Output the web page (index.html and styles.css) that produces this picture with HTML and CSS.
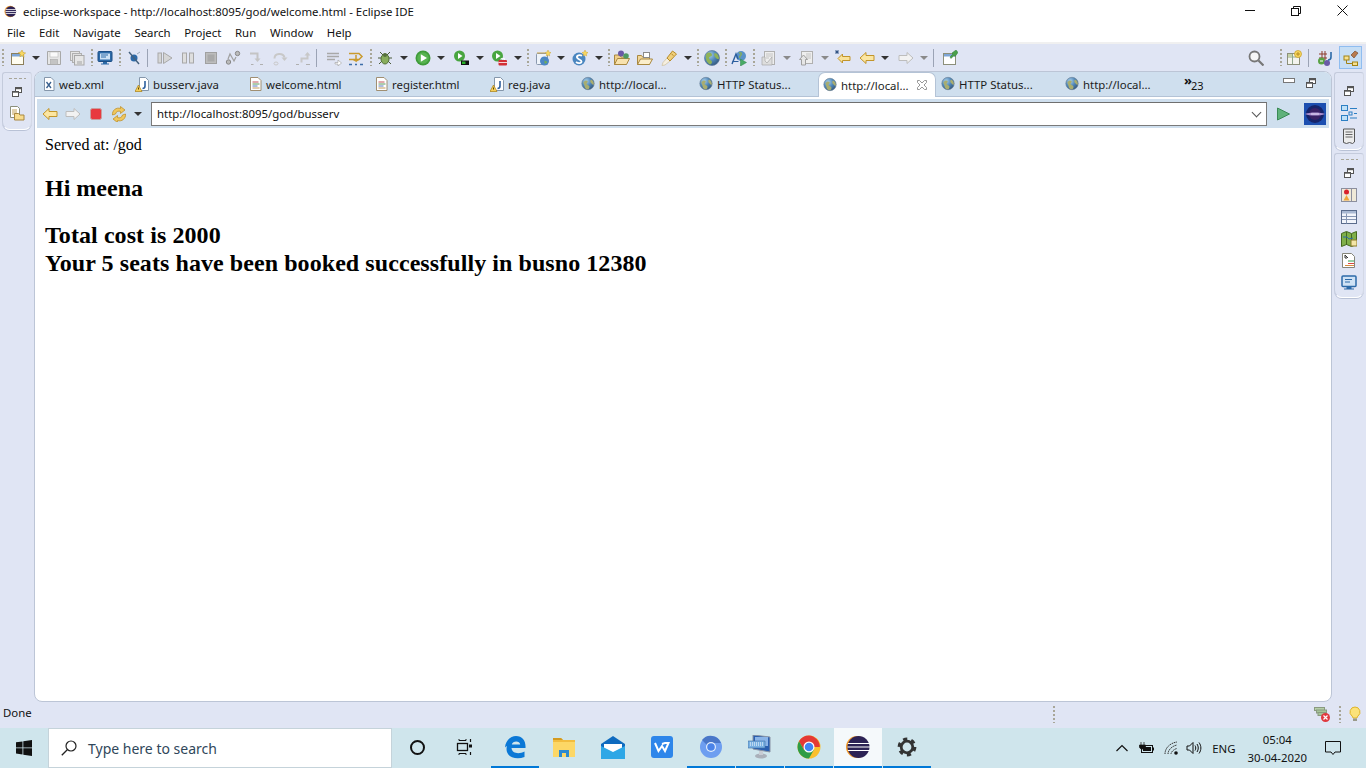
FILE: index.html
```html
<!DOCTYPE html>
<html lang="en">
<head>
  <meta charset="UTF-8" />
  <title>eclipse-workspace - http://localhost:8095/god/welcome.html - Eclipse IDE</title>
  <link rel="stylesheet" href="styles.css">
</head>
<body>

<!-- icon sheet -->
<svg class="sheet" xmlns="http://www.w3.org/2000/svg">
  <defs>
    <radialGradient id="gb" cx="35%" cy="30%" r="75%"><stop offset="0" stop-color="#a9cfe8"/><stop offset=".55" stop-color="#4f86b8"/><stop offset="1" stop-color="#35597e"/></radialGradient>
  </defs>
  <symbol id="i-eclipse" viewBox="0 0 16 16"><circle cx="7.6" cy="8" r="7" fill="#f39a2b"/><circle cx="8.4" cy="8" r="6.6" fill="#2c2255"/><path d="M2 5.6h13M1.8 8h13.4M2 10.4h13" stroke="#fff" stroke-width="1"/></symbol>
  <symbol id="i-new" viewBox="0 0 16 16"><rect x="1.5" y="3.5" width="12" height="11" fill="#fffdf0" stroke="#8c7f5a"/><rect x="2" y="4" width="11" height="2.5" fill="#7ea6d6"/><path d="M12 0l1 2.4 2.6.6-2 1.6.5 2.6L12 5.6l-2.100 1.200.5-2.600-2-1.600 2.600-.6z" fill="#f8d860" stroke="#c49a20" stroke-width=".5"/></symbol>
  <symbol id="i-save" viewBox="0 0 16 16"><path d="M1.500 1.500h13v13h-13z" fill="#e6e6e6" stroke="#a8a8a8"/><rect x="4" y="2" width="8" height="5" fill="#fafafa" stroke="#bbb" stroke-width=".6"/><rect x="4.500" y="9.500" width="7" height="5" fill="#c4c4c4" stroke="#a8a8a8" stroke-width=".6"/></symbol>
  <symbol id="i-saveall" viewBox="0 0 16 16"><rect x="1.500" y="1.500" width="9" height="9" fill="#e6e6e6" stroke="#b0b0b0"/><rect x="3.500" y="3.500" width="9" height="9" fill="#e0e0e0" stroke="#b0b0b0"/><rect x="5.500" y="5.500" width="9.500" height="9.500" fill="#e6e6e6" stroke="#a8a8a8"/><rect x="8" y="11" width="5" height="4" fill="#c4c4c4"/></symbol>
  <symbol id="i-monitor" viewBox="0 0 16 16"><rect x="1" y="1.500" width="14" height="10" rx="1" fill="#2c6aa8" stroke="#1d4f86"/><rect x="3" y="3.500" width="10" height="6" fill="#cfe2f5"/><path d="M4 5h7M4 7h5" stroke="#2c6aa8"/><path d="M6 12h4v1.500H12v1H4v-1h2z" fill="#2c6aa8"/></symbol>
  <symbol id="i-skip" viewBox="0 0 16 16"><circle cx="8" cy="8" r="3.500" fill="#2c6aa8"/><path d="M3 2l10 12" stroke="#44617f" stroke-width="1.400"/><path d="M11 4l3-2" stroke="#9ab" stroke-width="1"/></symbol>
  <symbol id="i-resume" viewBox="0 0 16 16"><rect x="1" y="3" width="3.500" height="10" fill="#d6d6d6" stroke="#a8a8a8"/><path d="M6.500 2.500l8.500 5.500-8.500 5.500z" fill="#d6d6d6" stroke="#a8a8a8"/></symbol>
  <symbol id="i-pause" viewBox="0 0 16 16"><rect x="2.500" y="3" width="4" height="10" fill="#dedede" stroke="#a8a8a8"/><rect x="9.500" y="3" width="4" height="10" fill="#dedede" stroke="#a8a8a8"/></symbol>
  <symbol id="i-stop" viewBox="0 0 16 16"><rect x="2.500" y="2.500" width="11" height="11" fill="#bdbdbd" stroke="#a0a0a0"/><rect x="4.500" y="4.500" width="7" height="7" fill="#a9a9a9"/></symbol>
  <symbol id="i-disc" viewBox="0 0 16 16"><circle cx="3.500" cy="12" r="2.200" fill="#bbb" stroke="#888"/><circle cx="12.500" cy="3.500" r="2.200" fill="#bbb" stroke="#888"/><path d="M3 9l2-5 4 7 2-4" fill="none" stroke="#a0a0a0" stroke-width="1.200"/></symbol>
  <symbol id="i-into" viewBox="0 0 16 16"><path d="M1 3.500h7.500V9" fill="none" stroke="#c4c4c4" stroke-width="2"/><path d="M5.500 8.500h6L8.500 12z" fill="#c4c4c4"/><path d="M2 14.500h2.500M11 14.500h3" stroke="#b0b0b0" stroke-width="1.200"/></symbol>
  <symbol id="i-over" viewBox="0 0 16 16"><path d="M2.500 8.500C2.500 3 11 2.500 12.500 7.500" fill="none" stroke="#c8c8c8" stroke-width="2"/><path d="M9.500 7.500h6L12.500 11z" fill="#c8c8c8"/><path d="M2 13.500a2 1.500 0 1 0 4 0a2 1.500 0 1 0-4 0" fill="none" stroke="#c8c8c8"/></symbol>
  <symbol id="i-ret" viewBox="0 0 16 16"><path d="M6.500 12.500V8.500h6V5" fill="none" stroke="#c8c8c8" stroke-width="2"/><path d="M9.500 5.500h6L12.500 2z" fill="#c8c8c8"/><path d="M1 14.500h3M11 14.500h4" stroke="#b0b0b0" stroke-width="1.200"/></symbol>
  <symbol id="i-frames" viewBox="0 0 16 16"><path d="M1 3.500h12M1 6.500h12M1 9.500h8" stroke="#a8a8a8" stroke-width="1.400"/><path d="M9 12.500h3V10l3.500 3-3.500 3v-2H9z" fill="#fff" stroke="#a8a8a8" stroke-width=".7"/></symbol>
  <symbol id="i-filter" viewBox="0 0 16 16"><path d="M1 3.500h10l3 3-3 3H1" fill="none" stroke="#c99a2e" stroke-width="1.500"/><path d="M8 5v6l-2.500-1.500M8 11l2.500-1.500" fill="none" stroke="#c99a2e" stroke-width="1.500"/><path d="M1 14.500h3M7 14.500h2M12 14.500h3" stroke="#3c6ea8" stroke-width="1.300"/></symbol>
  <symbol id="i-debug" viewBox="0 0 16 16"><path d="M3 2l3 3M13 2l-3 3M1 8h3M15 8h-3M2 14l3-3M14 14l-3-3" stroke="#4a5a3a" stroke-width="1"/><ellipse cx="8" cy="9" rx="4" ry="5" fill="#88ad5c" stroke="#4f6f35"/><circle cx="8" cy="5" r="2" fill="#55703c"/></symbol>
  <symbol id="i-run" viewBox="0 0 16 16"><circle cx="8" cy="8" r="7.500" fill="#3f9b3a"/><circle cx="8" cy="8" r="5.800" fill="#57b34f"/><path d="M5.800 4.200l6.200 3.800-6.200 3.800z" fill="#fff"/></symbol>
  <symbol id="i-cover" viewBox="0 0 16 16"><circle cx="6.500" cy="6" r="5.500" fill="#48a540"/><path d="M5 3l4.500 3L5 9z" fill="#fff"/><rect x="8" y="10.500" width="8" height="4.500" fill="#111"/><rect x="9" y="11.500" width="3.500" height="2.500" fill="#28b028"/></symbol>
  <symbol id="i-ext" viewBox="0 0 16 16"><circle cx="6.500" cy="6" r="5.500" fill="#48a540"/><path d="M5 3l4.500 3L5 9z" fill="#fff"/><rect x="7.500" y="10" width="8.500" height="5.500" rx="1" fill="#d22f35"/><path d="M10 10V8.500h3.500V10M7.500 12.500h8.500" stroke="#fff" stroke-width=".8" fill="none"/></symbol>
  <symbol id="i-server" viewBox="0 0 16 16"><rect x="1.500" y="3.500" width="11" height="11" rx="1" fill="#eef3fa" stroke="#8a98ae"/><path d="M2 3h8" stroke="#c8a24a"/><circle cx="9.500" cy="11" r="4.500" fill="#4b86c6"/><path d="M7 9c2 0 3 1 2.500 3s1.500 2 3 0" fill="#6fae56"/><path d="M13 0l.8 2 2.200.6-1.700 1.300.4 2.100L13 5l-1.700 1 .4-2.100L10 2.600l2.200-.6z" fill="#f8d860" stroke="#c49a20" stroke-width=".4"/></symbol>
  <symbol id="i-spring" viewBox="0 0 16 16"><circle cx="7" cy="9" r="6.500" fill="#4a86c0"/><path d="M10 5.800C7.500 4.500 4.500 5.500 5 7.500S9.500 9.500 9.500 11.500 6 13.500 4 12" fill="none" stroke="#fff" stroke-width="1.800"/><path d="M13 0l.8 2 2.200.6-1.700 1.300.4 2.100L13 5l-1.700 1 .4-2.100L10 2.600l2.200-.6z" fill="#f8d860" stroke="#c49a20" stroke-width=".4"/></symbol>
  <symbol id="i-openp" viewBox="0 0 16 16"><path d="M.5 5h5l1.500 2h5v7.500H.5z" fill="#f1cf8a" stroke="#a98840"/><path d="M.5 14.500l3-6h12l-3 6z" fill="#f8e2ae" stroke="#a98840"/><circle cx="7" cy="3.500" r="3" fill="#6a5aa6"/><circle cx="12" cy="6" r="2.800" fill="#4f9a62"/></symbol>
  <symbol id="i-opent" viewBox="0 0 16 16"><path d="M.5 5.500h4l1.500 2h6.500v7H.5z" fill="#f1d69a" stroke="#a98840"/><path d="M.5 14.500l3-5.500h12l-3 5.500z" fill="#fbeecb" stroke="#a98840"/><rect x="6.500" y="2.500" width="6" height="5" fill="#fff" stroke="#8a8a8a"/></symbol>
  <symbol id="i-pencil" viewBox="0 0 16 16"><path d="M1 15.500l1-3 4-4.500 3 3-5 4z" fill="#f6efe0" stroke="#cdbf9a" stroke-width=".7"/><path d="M6 8l5.500-7 4 3-6.500 7z" fill="#f0cf7a" stroke="#b78c2c"/><path d="M10.500 4l2 1.500" stroke="#b78c2c"/></symbol>
  <symbol id="i-globe" viewBox="0 0 16 16"><circle cx="8" cy="8" r="7.500" fill="url(#gb)"/><path d="M3 3c3-1 5 0 5 2s-3 1-3 3 3 2 3 4-2 3-3 2-3-3-3-5-1-4 1-6zM11 3c2 0 4 3 4 5s-2 1-3 0-3-4-1-5z" fill="#8fb25a"/><circle cx="8" cy="8" r="7.500" fill="none" stroke="#5c7a9c" stroke-width=".7"/></symbol>
  <symbol id="i-webp" viewBox="0 0 16 16"><circle cx="10" cy="6" r="5" fill="#5a92c8"/><path d="M8 3c2-1 3 1 2 2s-2 1-1 3" stroke="#86ad58" fill="none" stroke-width="1.400"/><path d="M1 14L5 4l2 5" fill="none" stroke="#2c5f9e" stroke-width="1.400"/><path d="M1.500 11.500h6" stroke="#2c5f9e"/><path d="M9.500 9l6 3.500-6 3.500z" fill="#49ab66" stroke="#2f8249" stroke-width=".5"/></symbol>
  <symbol id="i-nexta" viewBox="0 0 16 16"><rect x="3.500" y="1.500" width="10" height="13" fill="#eee" stroke="#b0b0b0"/><path d="M5 4h7M5 6h7M5 8h3" stroke="#c4c4c4"/><path d="M1 7h3v4l2 2 5-6v8H1z" fill="#ddd" stroke="#a8a8a8" stroke-width=".7"/></symbol>
  <symbol id="i-preva" viewBox="0 0 16 16"><rect x="3.500" y="1.500" width="11" height="12" fill="#eee" stroke="#b0b0b0"/><path d="M8 4h5M8 6h5M8 8h5" stroke="#c4c4c4"/><path d="M5.500 5l4 4.500H7.500V15h-4V9.500h-2z" fill="#e6e6e6" stroke="#a0a0a0"/></symbol>
  <symbol id="i-lastedit" viewBox="0 0 16 16"><path d="M7.500 4L3 8.500 7.500 13v-2.500h7.500v-4H7.500z" fill="#f9e29a" stroke="#c2952a"/><path d="M0 2h4M2 0v4M.5.500l3 3M3.500.500l-3 3" stroke="#2c4f80" stroke-width=".9"/></symbol>
  <symbol id="i-back" viewBox="0 0 16 16"><path d="M7 2.500L1 8l6 5.500V10.500h8v-5H7z" fill="#fbe6a2" stroke="#c2952a"/></symbol>
  <symbol id="i-fwd" viewBox="0 0 16 16"><path d="M9 2.500L15 8l-6 5.500V10.500H1v-5h8z" fill="#f2f2f2" stroke="#bdbdbd"/></symbol>
  <symbol id="i-pin" viewBox="0 0 16 16"><rect x="1.500" y="3.500" width="12" height="11" fill="#fff" stroke="#8c8f7a"/><rect x="2" y="4" width="11" height="2.500" fill="#7ea6d6"/><path d="M8 7l3-3-1-1 4-3 2 2.500-3 4-1-1-3 3z" fill="#4aa04a" stroke="#2c7a35" stroke-width=".5"/></symbol>
  <symbol id="i-search" viewBox="0 0 16 16"><circle cx="6.500" cy="6.500" r="5" fill="#f6f6f6" stroke="#777" stroke-width="1.800"/><path d="M10.500 10.500L15.500 15.500" stroke="#777" stroke-width="2.200"/></symbol>
  <symbol id="i-openpersp" viewBox="0 0 16 16"><rect x="1.500" y="3.500" width="12" height="11" fill="#f4f4ee" stroke="#8c8f7a"/><path d="M2 7h11M6.500 4v10" stroke="#8fa68c"/><rect x="2" y="4" width="4" height="3" fill="#c4d2a8"/><circle cx="12" cy="4" r="3.500" fill="#f8d860" stroke="#c49a20" stroke-width=".7"/><path d="M12 2v4M10 4h4" stroke="#a97f14" stroke-width=".8"/></symbol>
  <symbol id="i-jee" viewBox="0 0 16 16"><path d="M2 4h8M2 8h8M5 1v9M8 1v9" stroke="#8c3a2c" stroke-width="1"/><circle cx="4.500" cy="11" r="3.500" fill="#5aa245"/><path d="M3 11h3" stroke="#fff"/><circle cx="10" cy="13" r="3" fill="#6a5aa6"/><path d="M14 2v5c0 2-1 3-3 3" fill="none" stroke="#2c6aa8" stroke-width="1.600"/></symbol>
  <symbol id="i-java" viewBox="0 0 16 16"><rect x="1" y="6" width="5" height="4" fill="#f7e18f" stroke="#a28316"/><rect x="9.500" y="12" width="5" height="3.500" fill="#f7e18f" stroke="#a28316"/><path d="M3.500 10v3.500h6" fill="none" stroke="#a28316"/><path d="M8 5l4-4 3 2-4 5z" fill="#b87a4e" stroke="#6d4020" stroke-width=".6"/></symbol>

  <symbol id="t-xml" viewBox="0 0 16 16"><path d="M3.500 1.500h6.500l3 3v10h-9.500z" fill="#fff" stroke="#8597ab"/><path d="M5.500 6l4.500 6M10 6l-4.500 6" stroke="#375f8d" stroke-width="1.300"/></symbol>
  <symbol id="t-java" viewBox="0 0 16 16"><path d="M4.500 1.500h6l3 3v10h-9z" fill="#fff" stroke="#8597ab"/><path d="M10 5v5c0 2-1 2.500-2.500 2.500" fill="none" stroke="#2c5f9e" stroke-width="1.600"/><path d="M3.500 9L7 15.500H0z" fill="#f6cf59" stroke="#a97f14" stroke-width=".7"/><path d="M3.500 11.500v2" stroke="#5a4300"/></symbol>
  <symbol id="t-html" viewBox="0 0 16 16"><path d="M2.500 1.500h7.500l3 3v10h-10.500z" fill="#fff" stroke="#a08f72"/><path d="M4.500 6h6" stroke="#c2545a"/><path d="M4.500 8h7" stroke="#5a9a5a"/><path d="M4.500 10h5" stroke="#5a7ac2"/><path d="M4.500 12h7" stroke="#c29a5a"/></symbol>
  <symbol id="t-globe" viewBox="0 0 16 16"><circle cx="7" cy="7.500" r="6.200" fill="url(#gb)"/><path d="M2.500 6c1-1.500 3-2 4-1s-1 2-1 3 3 1 3 3-1.500 2.500-2.500 2.500-2.500-2-2.500-3.500-1.500-3-1-4zM10 3.500c2 1 3 2.500 3 4.500s-2 0-3-1-1-2.500 0-3.500z" fill="#a8ad70"/><circle cx="7" cy="7.500" r="6.200" fill="none" stroke="#6b8296" stroke-width=".6"/></symbol>
  <symbol id="i-close" viewBox="0 0 12 12"><path d="M1.500 1.500h2L6 4l2.500-2.500h2v2L8 6l2.500 2.500v2h-2L6 8l-2.500 2.500h-2v-2L4 6 1.500 3.500z" fill="none" stroke="#8c8c8c" stroke-width=".9"/></symbol>
  <symbol id="i-restore" viewBox="0 0 10 10"><rect x="3.500" y=".5" width="6" height="5" fill="#fff" stroke="#555"/><path d="M3.500 1h6v1.200h-6z" fill="#555"/><rect x=".5" y="4.500" width="6" height="5" fill="#fff" stroke="#555"/><path d="M1 4.500h5.500v1.200H1z" fill="#555"/></symbol>
  <symbol id="i-minview" viewBox="0 0 12 6"><rect x=".5" y=".5" width="11" height="4" fill="#fff" stroke="#777"/></symbol>
  <symbol id="i-go" viewBox="0 0 16 16"><path d="M2.500 2l12 6-12 6z" fill="#5fb27a" stroke="#3a8a55"/></symbol>
  <symbol id="i-ball" viewBox="0 0 22 22"><rect width="22" height="22" fill="#1c4fb0"/><circle cx="11" cy="11" r="9" fill="#16246a"/><circle cx="11" cy="11" r="6" fill="#3a2266"/><path d="M1 11c5-2 15-2 20 0-5 2-15 2-20 0z" fill="#a98fd0"/><path d="M7 11h8" stroke="#e6dcf5"/></symbol>
  <symbol id="i-red" viewBox="0 0 16 16"><rect x="2.500" y="2.500" width="11" height="11" rx="2" fill="#e83a3f" stroke="#c7a0a0"/></symbol>
  <symbol id="i-refresh" viewBox="0 0 16 16"><path d="M1.500 9a6 6 0 0 1 8-6.500V.5l4.500 3.500-4.500 3.500V5.500a3.500 3.500 0 0 0-5 2.500z" fill="#f0c75e" stroke="#bb8a1c" stroke-width=".7"/><path d="M14.500 8a6 6 0 0 1-8 6.500v2L2 13l4.500-3.500v2a3.500 3.500 0 0 0 5-2.500z" fill="#f0c75e" stroke="#bb8a1c" stroke-width=".7"/></symbol>
  <symbol id="i-persp" viewBox="0 0 16 16"><path d="M1.500 1.500h7l2 2v9h-9z" fill="#fff" stroke="#8c8f7a"/><path d="M3 5h5M3 7h5M3 9h5" stroke="#c2a25a"/><path d="M5.500 8.500h4l1.500 1.500h4v5H5.500z" fill="#f8dc8e" stroke="#a98840"/></symbol>

  <symbol id="r-list" viewBox="0 0 16 16"><rect x=".5" y=".5" width="6" height="5" fill="#bfe0f7" stroke="#2c7fc4"/><rect x=".5" y="10.500" width="6" height="5" fill="#bfe0f7" stroke="#2c7fc4"/><rect x="8" y="7" width="3" height="3" fill="none" stroke="#2c7fc4"/><path d="M9 3.500h7M13 8.500h3M9 13h7" stroke="#2c7fc4"/></symbol>
  <symbol id="r-page" viewBox="0 0 16 16"><path d="M2.500 1h11v13l-2 1.500-3-1-3 1-3-1z" fill="#ececec" stroke="#555"/><path d="M4.500 4h7M4.500 6.500h7M4.500 9h7" stroke="#666"/></symbol>
  <symbol id="r-mark" viewBox="0 0 16 16"><rect x=".5" y="1.500" width="15" height="13" fill="#efe9d8" stroke="#8c8f9e"/><path d="M10.500 2v12" stroke="#8c8f9e"/><circle cx="5.500" cy="5" r="2.500" fill="#d9202a"/><path d="M5.500 8l3 5.500h-6z" fill="#f0a53a"/></symbol>
  <symbol id="r-table" viewBox="0 0 16 16"><rect x=".5" y="1.500" width="15" height="13" fill="#f2f5fb" stroke="#5a6c8c"/><rect x="1" y="2" width="14" height="2.500" fill="#a9b9d3"/><path d="M1 7.500h14M1 10.500h14M5.500 4.500v10" stroke="#8696b3"/></symbol>
  <symbol id="r-map" viewBox="0 0 16 16"><path d="M.5 2.500l5-2 5 2 5-2v13l-5 2-5-2-5 2z" fill="#7fb04a" stroke="#44681e"/><path d="M5.500 1v13M10.500 3v12" stroke="#44681e"/><path d="M2 6h4l2 2 4-1" stroke="#2c6aa8" fill="none"/><rect x="10" y="9" width="6" height="6" fill="#f4e6a8" stroke="#8c7a2c"/></symbol>
  <symbol id="r-form" viewBox="0 0 16 16"><path d="M1.500.5h9l3 3v11h-12z" fill="#fff" stroke="#85857a"/><path d="M4 2l3 3M4 2v3h2" stroke="#333" fill="none"/><path d="M7 8h6" stroke="#2fa04a"/><path d="M7 10.500h6" stroke="#d6473f"/><path d="M4 12.500h9" stroke="#d68a3f"/></symbol>
  <symbol id="r-console" viewBox="0 0 16 16"><rect x="1" y="1" width="14" height="10.500" rx="1" fill="#cfe2f5" stroke="#2c6aa8" stroke-width="1.500"/><path d="M4 4.500h7M4 7h5" stroke="#2c6aa8"/><path d="M5.500 12h5v1.500H13v1H3v-1h2.500z" fill="#2c6aa8"/></symbol>

  <symbol id="s-err" viewBox="0 0 16 16"><rect x=".5" y="1.500" width="10" height="3" fill="#b5cfa8" stroke="#8a9a80"/><rect x="2.500" y="4" width="10" height="3" fill="#a5c598" stroke="#8a9a80"/><rect x="4" y="6.500" width="8" height="3" fill="#a5c598" stroke="#8a9a80"/><circle cx="11.500" cy="11.500" r="4.500" fill="#e0383e"/><path d="M9.500 9.500l4 4M13.500 9.500l-4 4" stroke="#fff" stroke-width="1.200"/></symbol>
  <symbol id="s-bulb" viewBox="0 0 16 16"><path d="M8 1a5 5 0 0 0-3 9c.6.600 1 1.300 1 2h4c0-.7.400-1.400 1-2a5 5 0 0 0-3-9z" fill="#fbe27a" stroke="#e0b52a"/><rect x="6" y="12.500" width="4" height="2.500" fill="#9a9a8a"/></symbol>

  <symbol id="c-max" viewBox="0 0 10 10"><path d="M2.500 2.500V.5h7v7h-2" fill="none" stroke="#111"/><rect x=".5" y="2.500" width="7" height="7" fill="none" stroke="#111"/></symbol>
  <symbol id="c-close" viewBox="0 0 11 11"><path d="M.5.500l10 10M10.500.500l-10 10" stroke="#111"/></symbol>

  <symbol id="w-win" viewBox="0 0 16 16"><path d="M0 2.300l6.500-.9v6.100H0zM7.300 1.300L16 0v7.500H7.300zM0 8.300h6.500v6.200L0 13.600zM7.300 8.300H16V16l-8.700-1.200z" fill="#111"/></symbol>
  <symbol id="w-search" viewBox="0 0 16 16"><circle cx="10" cy="6" r="5" fill="none" stroke="#222" stroke-width="1.200"/><path d="M6.500 9.500L.8 15.200" stroke="#222" stroke-width="1.300"/></symbol>
  <symbol id="w-task" viewBox="0 0 16 16"><path d="M3 0v1.500h7V0M3 16v-1.500h7V16" fill="none" stroke="#111"/><rect x="1.500" y="4.500" width="10" height="7" fill="none" stroke="#111" stroke-width="1.300"/><path d="M14.500 0v3M14.500 13v3" stroke="#111" stroke-width="1.200"/><rect x="13" y="5.500" width="3" height="3" fill="#111"/></symbol>
  <symbol id="w-edge" viewBox="0 0 24 24"><path fill-rule="evenodd" d="M2 12.500C2.500 5.500 7.500 1 13 1c6.500 0 10 5 9.500 12H8.500c.5 5.500 7.500 6.500 13 3.500v5.500C13 25.500 3.500 22 3.500 14c0-1 .2-2 .5-3-1 .500-1.500 1-2 1.500zM8.800 9.500h8.400C17 5.500 9.500 5.500 8.800 9.500z" fill="#0b78d6"/></symbol>
  <symbol id="w-files" viewBox="0 0 24 24"><path d="M1 3h8l2 2h12v17H1z" fill="#f2bd3f"/><path d="M1 3h8l2 2H1z" fill="#d49a1e"/><rect x="1" y="7" width="22" height="15" fill="#fcd766"/><path d="M7 22v-7h10v7h-3v-4h-4v4z" fill="#2b8ad0"/></symbol>
  <symbol id="w-mail" viewBox="0 0 24 24"><path d="M0 9L12 1l12 8v14H0z" fill="#0f6bbf"/><path d="M3 9h18v6l-9 5-9-5z" fill="#fff"/><path d="M0 11l12 6 12-6v13H0z" fill="#2ea7e6"/></symbol>
  <symbol id="w-wps" viewBox="0 0 24 24"><rect x="1" y="1" width="22" height="22" rx="3" fill="#2e86ea"/><path d="M5 8l3.500 8 3.500-5 3 5 3.500-8H15l-3 1" fill="none" stroke="#fff" stroke-width="2"/></symbol>
  <symbol id="w-chromium" viewBox="0 0 24 24"><circle cx="12" cy="12" r="11" fill="#6e9ef0"/><path d="M3 5a11 11 0 0 1 19 3H12a4 4 0 0 0-4 2z" fill="#4a77c8"/><circle cx="12" cy="12" r="5" fill="#e4eefc"/><circle cx="12" cy="12" r="3.800" fill="#4a83e8"/></symbol>
  <symbol id="w-pc" viewBox="0 0 24 24"><path d="M5 0l17 2v15L5 14z" fill="#2a5fb0" stroke="#8a94a5"/><rect x="7" y="2" width="13" height="9" fill="#8ab4e8"/><path d="M0 6h17v7H0z" fill="#79b0e2" stroke="#3e6fa5" stroke-width=".6"/><path d="M2 8h13M2 10h13" stroke="#fff" stroke-dasharray="1 1"/><ellipse cx="13" cy="21" rx="6" ry="2.500" fill="#aab0ba"/><rect x="11" y="16" width="4" height="4" fill="#c8ccd4"/></symbol>
  <symbol id="w-chrome" viewBox="0 0 24 24"><circle cx="12" cy="12" r="11.500" fill="#fbc02d"/><path d="M12 .5A11.500 11.500 0 0 0 2 6.300L7 15l5-3h10.800A11.500 11.500 0 0 0 12 .5z" fill="#e53935"/><path d="M2 6.300A11.500 11.500 0 0 0 12 23.500l5-9-5-2.500-5 3z" fill="#2e9c46"/><circle cx="12" cy="12" r="5.500" fill="#fff"/><circle cx="12" cy="12" r="4.300" fill="#4285f4"/></symbol>
  <symbol id="w-eclipse" viewBox="0 0 24 24"><circle cx="11" cy="12" r="11" fill="#f39a2b"/><circle cx="12.500" cy="12" r="11" fill="#2c2255"/><path d="M2 8.500h22M1.500 12h23M2 15.500h22" stroke="#fff" stroke-width="1.200"/></symbol>
  <symbol id="w-gear" viewBox="0 0 20 20"><circle cx="10" cy="10" r="7.600" fill="none" stroke="#333" stroke-width="3.600" stroke-dasharray="4 3.960"/><circle cx="10" cy="10" r="5.800" fill="none" stroke="#333" stroke-width="2.800"/></symbol>
  <symbol id="w-chev" viewBox="0 0 12 8"><path d="M.5 7L6 1.500 11.500 7" fill="none" stroke="#111" stroke-width="1.200"/></symbol>
  <symbol id="w-batt" viewBox="0 0 16 12"><path d="M3 0v3M6 0v3M1.500 3h6v2c0 1-1 2-3 2s-3-1-3-2z" fill="#111" stroke="#111" stroke-width=".7"/><rect x="3.500" y="3.500" width="11" height="7" fill="none" stroke="#111"/><rect x="5" y="5" width="8" height="4" fill="#111"/><rect x="14.500" y="5.500" width="1.500" height="3" fill="#111"/></symbol>
  <symbol id="w-wifi" viewBox="0 0 16 14"><path d="M1 13C1 7 6 2 13 1M4 13c0-4 4-8 9-9M7 13c0-2 3-5 6-5.500" fill="none" stroke="#333" stroke-width="1" stroke-dasharray="1.500 .7"/><circle cx="12" cy="12" r="1.800" fill="#111"/></symbol>
  <symbol id="w-vol" viewBox="0 0 16 14"><path d="M1 5h2.500L7 1.500v11L3.500 9H1z" fill="none" stroke="#111"/><path d="M9 4.500c1 1.500 1 3.500 0 5M11 3c1.700 2.500 1.700 5.500 0 8M13 1.500c2.500 3.500 2.500 7.500 0 11" fill="none" stroke="#111"/></symbol>
  <symbol id="w-note" viewBox="0 0 16 16"><path d="M.5 1.500h15v10.500H10l-2 2.500-2-2.500H.5z" fill="none" stroke="#111"/></symbol>
</svg>

<!-- title -->
<div class="titlebar">
  <svg class="ic title-ic"><use href="#i-eclipse"/></svg>
  <span class="title-text">eclipse-workspace - http://localhost:8095/god/welcome.html - Eclipse IDE</span>
  <div class="winbtns">
    <div class="winbtn"><span class="w-min"></span></div>
    <div class="winbtn"><svg class="ic10"><use href="#c-max"/></svg></div>
    <div class="winbtn"><svg class="w-close"><use href="#c-close"/></svg></div>
  </div>
</div>

<div class="menubar">
  <span>File</span><span>Edit</span><span>Navigate</span><span>Search</span><span>Project</span><span>Run</span><span>Window</span><span>Help</span>
</div>

<!-- main toolbar -->
<div class="toolbar">
  <i class="grip g2"></i>
  <svg class="ic g6"><use href="#i-new"/></svg><i class="arr g6"></i>
  <svg class="ic g6"><use href="#i-save"/></svg>
  <svg class="ic"><use href="#i-saveall"/></svg>
  <i class="grip g6"></i>
  <svg class="ic g4"><use href="#i-monitor"/></svg>
  <i class="grip g6"></i>
  <svg class="ic g5"><use href="#i-skip"/></svg>
  <i class="sep g5"></i>
  <svg class="ic g9"><use href="#i-resume"/></svg>
  <svg class="ic"><use href="#i-pause"/></svg>
  <svg class="ic"><use href="#i-stop"/></svg>
  <svg class="ic g6"><use href="#i-disc"/></svg>
  <svg class="ic g8"><use href="#i-into"/></svg>
  <svg class="ic"><use href="#i-over"/></svg>
  <svg class="ic"><use href="#i-ret"/></svg>
  <i class="sep g5"></i>
  <svg class="ic g9"><use href="#i-frames"/></svg>
  <svg class="ic g6"><use href="#i-filter"/></svg>
  <i class="grip g6"></i>
  <svg class="ic g5"><use href="#i-debug"/></svg><i class="arr"></i>
  <svg class="ic"><use href="#i-run"/></svg><i class="arr g6"></i>
  <svg class="ic g8"><use href="#i-cover"/></svg><i class="arr"></i>
  <svg class="ic"><use href="#i-ext"/></svg><i class="arr"></i>
  <i class="grip g5"></i>
  <svg class="ic g6"><use href="#i-server"/></svg><i class="arr g6"></i>
  <svg class="ic"><use href="#i-spring"/></svg><i class="arr"></i>
  <i class="grip g5"></i>
  <svg class="ic g4"><use href="#i-openp"/></svg>
  <svg class="ic"><use href="#i-opent"/></svg>
  <svg class="ic g8"><use href="#i-pencil"/></svg><i class="arr"></i>
  <i class="grip g5"></i>
  <svg class="ic g5"><use href="#i-globe"/></svg>
  <i class="grip g5"></i>
  <svg class="ic g4"><use href="#i-webp"/></svg>
  <i class="grip g6"></i>
  <svg class="ic g6"><use href="#i-nexta"/></svg><i class="arr off g6"></i>
  <svg class="ic"><use href="#i-preva"/></svg><i class="arr off"></i>
  <svg class="ic g6"><use href="#i-lastedit"/></svg>
  <svg class="ic g8"><use href="#i-back"/></svg><i class="arr g6"></i>
  <svg class="ic g9"><use href="#i-fwd"/></svg><i class="arr off g6"></i>
  <i class="sep g5"></i>
  <svg class="ic g8"><use href="#i-pin"/></svg>
  <div class="tb-right">
    <svg class="ic"><use href="#i-search"/></svg>
    <i class="grip g16"></i>
    <svg class="ic g4"><use href="#i-openpersp"/></svg>
    <i class="sep g6"></i>
    <svg class="ic g8"><use href="#i-jee"/></svg>
    <div class="persp-on"><svg class="ic"><use href="#i-java"/></svg></div>
  </div>
</div>

<div class="main">
  <div class="trim">
    <div class="stack stack-left">
      <i class="dots"></i>
      <svg class="ic10"><use href="#i-restore"/></svg>
      <svg class="ic"><use href="#i-persp"/></svg>
    </div>
  </div>

  <div class="editor">
    <div class="tabs">
      <div class="tab t-xml"><svg class="ic tab-ic"><use href="#t-xml"/></svg>web.xml</div>
      <div class="tab t-busserv"><svg class="ic tab-ic"><use href="#t-java"/></svg>busserv.java</div>
      <div class="tab t-welcome"><svg class="ic tab-ic"><use href="#t-html"/></svg>welcome.html</div>
      <div class="tab t-register"><svg class="ic tab-ic"><use href="#t-html"/></svg>register.html</div>
      <div class="tab t-reg"><svg class="ic tab-ic"><use href="#t-java"/></svg>reg.java</div>
      <div class="tab t-http"><svg class="ic tab-ic"><use href="#t-globe"/></svg>http://local...</div>
      <div class="tab t-status"><svg class="ic tab-ic"><use href="#t-globe"/></svg>HTTP Status...</div>
      <div class="tab t-http active"><svg class="ic tab-ic"><use href="#t-globe"/></svg>http://local...<svg class="tab-close"><use href="#i-close"/></svg></div>
      <div class="tab t-status"><svg class="ic tab-ic"><use href="#t-globe"/></svg>HTTP Status...</div>
      <div class="tab t-http"><svg class="ic tab-ic"><use href="#t-globe"/></svg>http://local...</div>
      <div class="more"><b>&raquo;</b><span>23</span></div>
      <div class="tab-tools">
        <svg class="ic-min"><use href="#i-minview"/></svg>
        <svg class="ic10"><use href="#i-restore"/></svg>
      </div>
    </div>

    <div class="browserbar">
      <svg class="ic"><use href="#i-back"/></svg>
      <svg class="ic g7b"><use href="#i-fwd"/></svg>
      <svg class="ic g7b"><use href="#i-red"/></svg>
      <svg class="ic g7b"><use href="#i-refresh"/></svg>
      <i class="arr arr-b"></i>
      <div class="address">
        <span>http://localhost:8095/god/busserv</span>
        <i class="combo"></i>
      </div>
      <svg class="ic go"><use href="#i-go"/></svg>
      <svg class="ball"><use href="#i-ball"/></svg>
    </div>

    <div class="content">
      Served at: /god
      <h2 class="hello">Hi meena</h2>
      <h2 class="booked">Total cost is 2000<br>Your 5 seats have been booked successfully in busno 12380</h2>
    </div>
  </div>

  <div class="trim">
    <div class="stack stack-r1">
      <i class="dots"></i>
      <svg class="ic10"><use href="#i-restore"/></svg>
      <svg class="ic"><use href="#r-list"/></svg>
      <svg class="ic"><use href="#r-page"/></svg>
    </div>
    <div class="stack stack-r2">
      <i class="dots"></i>
      <svg class="ic10"><use href="#i-restore"/></svg>
      <svg class="ic"><use href="#r-mark"/></svg>
      <svg class="ic"><use href="#r-table"/></svg>
      <svg class="ic"><use href="#r-map"/></svg>
      <svg class="ic"><use href="#r-form"/></svg>
      <svg class="ic"><use href="#r-console"/></svg>
    </div>
  </div>
</div>

<div class="statusbar">
  <span class="status-text">Done</span>
  <i class="grip status-grip"></i>
  <svg class="ic"><use href="#s-err"/></svg>
  <i class="grip g9"></i>
  <svg class="ic g6"><use href="#s-bulb"/></svg>
</div>

<!-- windows taskbar -->
<div class="taskbar">
  <div class="startbtn"><svg class="ic"><use href="#w-win"/></svg></div>
  <div class="searchbox">
    <svg class="ic"><use href="#w-search"/></svg>
    <span>Type here to search</span>
  </div>
  <div class="cell"><span class="cortana"></span></div>
  <div class="cell cell-task"><svg class="ic"><use href="#w-task"/></svg></div>
  <div class="cell on"><svg class="app"><use href="#w-edge"/></svg></div>
  <div class="cell"><svg class="app"><use href="#w-files"/></svg></div>
  <div class="cell"><svg class="app"><use href="#w-mail"/></svg></div>
  <div class="cell"><svg class="app"><use href="#w-wps"/></svg></div>
  <div class="cell on"><svg class="app"><use href="#w-chromium"/></svg></div>
  <div class="cell on"><svg class="app"><use href="#w-pc"/></svg></div>
  <div class="cell on"><svg class="app"><use href="#w-chrome"/></svg></div>
  <div class="cell on current"><svg class="app"><use href="#w-eclipse"/></svg></div>
  <div class="cell on"><svg class="gear"><use href="#w-gear"/></svg></div>
  <div class="tray">
    <svg class="tray-chev"><use href="#w-chev"/></svg>
    <svg class="tray-batt"><use href="#w-batt"/></svg>
    <svg class="tray-wifi"><use href="#w-wifi"/></svg>
    <svg class="tray-vol"><use href="#w-vol"/></svg>
    <span class="lang">ENG</span>
    <div class="clock"><span>05:04</span><span>30-04-2020</span></div>
    <svg class="ic note"><use href="#w-note"/></svg>
  </div>
</div>

</body>
</html>
```

FILE: styles.css
```css
html, body {
  margin: 0;
  height: 100%;
}

body {
  display: flex;
  flex-direction: column;
  height: 100vh;
  overflow: hidden;
  font-family: "Noto Sans", sans-serif;
  font-size: 11.4px;
  color: #111;
  background: #e0e5f4;
}

.sheet {
  position: absolute;
  width: 0;
  height: 0;
}

.ic {
  display: block;
  flex: none;
  width: 16px;
  height: 16px;
}

.ic10 {
  display: block;
  flex: none;
  width: 10px;
  height: 10px;
}

/* window title */
.titlebar {
  display: flex;
  align-items: center;
  height: 22px;
  flex: none;
  box-sizing: border-box;
  padding-top: 1px;
  background: #fff;
}

.title-ic {
  width: 13px;
  height: 13px;
  margin-left: 4px;
}

.title-text {
  margin-left: 6px;
}

.winbtns {
  display: flex;
  margin-left: auto;
  margin-right: 1px;
  margin-top: -2px;
}

.winbtn {
  display: flex;
  align-items: center;
  justify-content: center;
  width: 46px;
  height: 20px;
}

.w-min {
  width: 10px;
  height: 1px;
  background: #111;
}

.w-close {
  width: 11px;
  height: 11px;
}

.menubar {
  display: flex;
  align-items: center;
  gap: 13.7px;
  height: 20px;
  flex: none;
  padding-left: 7px;
  background: #fff;
}

/* main toolbar */
.toolbar {
  display: flex;
  align-items: center;
  flex: none;
  height: 29px;
  box-sizing: border-box;
  border-top: 2px solid #f0f0f0;
}

.toolbar > *, .tb-right > * {
  margin-left: 7px;
}

.toolbar > .g2 { margin-left: 2px; }
.toolbar > .g4, .tb-right > .g4 { margin-left: 4px; }
.toolbar > .g5 { margin-left: 5px; }
.toolbar > .g6, .tb-right > .g6 { margin-left: 6px; }
.toolbar > .g8, .tb-right > .g8 { margin-left: 8px; }
.toolbar > .g9 { margin-left: 9px; }
.tb-right > .g16 { margin-left: 16px; }

.grip {
  display: block;
  flex: none;
  width: 2px;
  height: 17px;
  background: repeating-linear-gradient(#a8a698 0 2px, transparent 2px 4px);
}

.sep {
  display: block;
  flex: none;
  width: 1px;
  height: 18px;
  background: #9ba3b5;
}

.arr {
  display: block;
  flex: none;
  width: 0;
  height: 0;
  border-left: 4px solid transparent;
  border-right: 4px solid transparent;
  border-top: 4px solid #333;
}

.arr.off {
  border-top-color: #8a8a8a;
}

.tb-right {
  display: flex;
  align-items: center;
  margin-left: auto;
  margin-right: 4px;
}

.persp-on {
  display: flex;
  align-items: center;
  justify-content: center;
  width: 21px;
  height: 21px;
  margin-left: 6px;
  background: #c6def5;
  border: 1px solid #8fbdf0;
}

/* middle part */
.main {
  display: flex;
  flex: 1;
  min-height: 0;
}

.trim {
  width: 34px;
  flex: none;
  box-sizing: border-box;
  padding: 1px 2px 0;
}

.stack {
  display: flex;
  flex-direction: column;
  align-items: center;
  box-sizing: border-box;
  width: 30px;
  border: 1px solid #fff;
  border-color: #c4cbdc #d4d9e6 #fff #c4cbdc;
  box-shadow: 0 1px 0 #b9c2d6;
  border-radius: 3px 3px 8px 8px;
  padding-top: 5px;
}

.stack-left {
  height: 58px;
}

.stack-left .ic10 {
  margin-top: 8px;
}

.stack-left .ic {
  margin-top: 8px;
}

.stack-r1 {
  height: 78px;
}

.stack-r2 {
  height: 145px;
  margin-top: 3px;
}

.stack .dots {
  width: 17px;
  height: 1px;
  background: repeating-linear-gradient(90deg, #a8a698 0 3px, transparent 3px 5px);
}

.stack-r1 .ic10, .stack-r2 .ic10 {
  margin: 8px 0 9px;
}

.stack-r1 .ic {
  margin-bottom: 7px;
}

.stack-r2 .ic {
  margin-bottom: 6px;
}

.editor {
  flex: 1;
  min-width: 0;
  display: flex;
  flex-direction: column;
  box-sizing: border-box;
  background: #fff;
  border: 1px solid #bcc5d6;
  border-radius: 8px;
  overflow: hidden;
}

.tabs {
  display: flex;
  align-items: stretch;
  flex: none;
  height: 25px;
  box-sizing: border-box;
  background: #cfdfee;
  border-bottom: 1px solid #b4c3d6;
  padding-left: 1px;
}

.tab {
  display: flex;
  align-items: center;
  box-sizing: border-box;
  flex: none;
  padding-left: 5px;
  color: #1c1c1c;
}

.tab-ic {
  margin-right: 2px;
}

.t-xml { width: 94px; }
.t-busserv { width: 113px; }
.t-welcome { width: 126px; }
.t-register { width: 116px; }
.t-reg { width: 91px; }
.t-http { width: 118px; }
.t-status { width: 124px; }

.tab.active {
  position: relative;
  height: 25px;
  background: #fff;
  border: 1px solid #b4c3d6;
  border-bottom: 0;
  border-radius: 7px 7px 0 0;
  padding-left: 4px;
}

.tab-close {
  width: 12px;
  height: 12px;
  margin-left: auto;
  margin-right: 7px;
}

.more {
  position: relative;
  width: 30px;
  margin-left: 6px;
  font-size: 11px;
}

.more b {
  position: absolute;
  left: 0;
  top: 1px;
  font-size: 13px;
  line-height: 14px;
}

.more span {
  position: absolute;
  left: 7px;
  top: 7px;
  line-height: 14px;
}

.tab-tools {
  display: flex;
  align-items: flex-start;
  gap: 11px;
  margin-left: auto;
  margin-right: 15px;
  padding-top: 6px;
}

.ic-min {
  width: 12px;
  height: 6px;
}

/* browser bar */
.browserbar {
  display: flex;
  align-items: center;
  flex: none;
  height: 29px;
  margin: 2px 2px 0 2px;
  padding-left: 5px;
  background: #cfdfee;
}

.g7b {
  margin-left: 7px;
}

.arr-b {
  margin-left: 7px;
}

.address {
  display: flex;
  align-items: center;
  flex: 1;
  box-sizing: border-box;
  height: 24px;
  margin-left: 9px;
  padding-left: 5px;
  background: #fff;
  border: 1px solid #7a7a7a;
  border-top-color: #6f6f6f;
}

.combo {
  width: 6px;
  height: 6px;
  margin-left: auto;
  margin-right: 6px;
  margin-top: -3px;
  border-right: 1px solid #555;
  border-bottom: 1px solid #555;
  transform: rotate(45deg);
}

.go {
  margin-left: 8px;
}

.ball {
  display: block;
  flex: none;
  width: 22px;
  height: 22px;
  margin: 0 3px 0 13px;
}

.content {
  flex: 1;
  padding: 8px 8px 8px 10px;
  font-family: "Liberation Serif", serif;
  font-size: 16px;
  color: #000;
}

.content h2 {
  margin: 20px 0;
  font-size: 24px;
  line-height: 28px;
}

.content .hello {
  margin-bottom: 19px;
}

.content .booked {
  margin-top: 19px;
  letter-spacing: 0.07px;
}

/* status */
.statusbar {
  display: flex;
  align-items: center;
  flex: none;
  box-sizing: border-box;
  height: 26px;
  padding: 0 3px 2px 3px;
}

.status-text {
  margin-bottom: 4px;
}

.status-grip {
  margin-left: auto;
  margin-right: 259px;
}

.statusbar .g9 {
  margin-left: 9px;
}

.statusbar .g6 {
  margin-left: 6px;
}

/* taskbar */
.taskbar {
  display: flex;
  align-items: stretch;
  flex: none;
  height: 40px;
  background: #cfe5ec;
  color: #111;
}

.startbtn {
  display: flex;
  align-items: center;
  justify-content: center;
  width: 48px;
}

.searchbox {
  display: flex;
  align-items: center;
  box-sizing: border-box;
  width: 344px;
  padding-left: 12px;
  background: #fff;
  border: 1px solid #c5d3da;
  font-size: 14px;
  color: #30475a;
}

.searchbox span {
  margin-left: 11px;
}

.cell {
  display: flex;
  align-items: center;
  justify-content: center;
  box-sizing: border-box;
  width: 48px;
  margin-left: 1px;
  border-bottom: 2px solid transparent;
}

.cell.on {
  border-bottom-color: #0078d7;
}

.cell.current {
  background: #f5f9fb;
}

.cell-task .ic {
  margin-right: 4px;
}

.cortana {
  width: 11px;
  height: 11px;
  border: 2px solid #111;
  border-radius: 50%;
}

.app {
  width: 24px;
  height: 24px;
}

.gear {
  width: 20px;
  height: 20px;
}

.tray {
  display: flex;
  align-items: center;
  margin-left: auto;
  padding-right: 25px;
}

.tray-chev { width: 12px; height: 8px; }
.tray-batt { width: 16px; height: 12px; margin-left: 10px; }
.tray-wifi { width: 16px; height: 14px; margin-left: 10px; }
.tray-vol { width: 16px; height: 14px; margin-left: 6px; }

.lang {
  margin-left: 10px;
}

.clock {
  display: flex;
  flex-direction: column;
  align-items: center;
  margin-left: 12px;
  padding-top: 1px;
  line-height: 18px;
}

.note {
  margin-left: 18px;
}
```
